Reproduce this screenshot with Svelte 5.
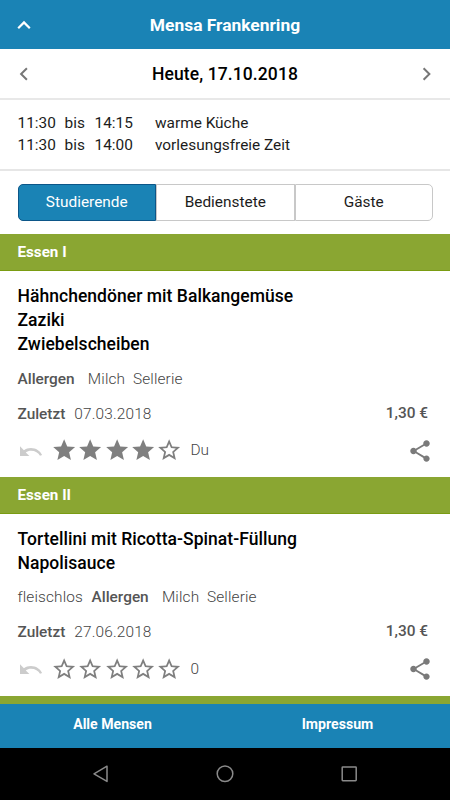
<script lang="ts">
	type Meal = {
		category: string;
		components: string[];
		tags: string[];
		allergens: string[];
		lastServed: string;
		price: string;
		rating: number;
		ratingLabel: string;
	};

	const hours = [
		{ from: '11:30', to: '14:15', label: 'warme Küche' },
		{ from: '11:30', to: '14:00', label: 'vorlesungsfreie Zeit' }
	];
	const groups = ['Studierende', 'Bedienstete', 'Gäste'];
	const meals: Meal[] = [
		{
			category: 'Essen I',
			components: ['Hähnchendöner mit Balkangemüse', 'Zaziki', 'Zwiebelscheiben'],
			tags: [],
			allergens: ['Milch', 'Sellerie'],
			lastServed: '07.03.2018',
			price: '1,30 €',
			rating: 4,
			ratingLabel: 'Du'
		},
		{
			category: 'Essen II',
			components: ['Tortellini mit Ricotta-Spinat-Füllung', 'Napolisauce'],
			tags: ['fleischlos'],
			allergens: ['Milch', 'Sellerie'],
			lastServed: '27.06.2018',
			price: '1,30 €',
			rating: 0,
			ratingLabel: '0'
		}
	];

	let activeGroup = $state('Studierende');
</script>

<div class="app">
	<header>
		<button class="icon" aria-label="Menü">
			<svg width="24" height="24" viewBox="0 0 24 24"><path d="M6.2 15.2 12 9.4l5.8 5.8" fill="none" stroke="#fff" stroke-width="2.2" /></svg>
		</button>
		<h1>Mensa Frankenring</h1>
	</header>

	<div class="date">
		<button class="icon" aria-label="Zurück">
			<svg width="24" height="24" viewBox="0 0 24 24"><path d="M14.9 6.2 9.1 12l5.8 5.8" fill="none" stroke="#777" stroke-width="2" /></svg>
		</button>
		<h2>Heute, 17.10.2018</h2>
		<button class="icon" aria-label="Weiter">
			<svg width="24" height="24" viewBox="0 0 24 24"><path d="M9.6 6.2 15.4 12l-5.8 5.8" fill="none" stroke="#777" stroke-width="2" /></svg>
		</button>
	</div>

	<div class="hours">
		{#each hours as hour}
			<span>{hour.from}</span>
			<span>bis</span>
			<span>{hour.to}</span>
			<span>{hour.label}</span>
		{/each}
	</div>

	<main>
		<div class="segments">
			{#each groups as group}
				<button class:active={group === activeGroup} onclick={() => (activeGroup = group)}>{group}</button>
			{/each}
		</div>

		{#each meals as meal}
			<h3>{meal.category}</h3>
			<section>
				<div class="components">
					{#each meal.components as component}
						<div>{component}</div>
					{/each}
				</div>
				<div class="row allergens">
					{#each meal.tags as tag}
						<span class="tag">{tag}</span>
					{/each}
					<b>Allergen</b>
					{#each meal.allergens as allergen}
						<span class="allergen">{allergen}</span>
					{/each}
				</div>
				<div class="row last">
					<b>Zuletzt</b>
					<span class="served">{meal.lastServed}</span>
					<b class="price">{meal.price}</b>
				</div>
				<div class="rating">
					<svg class="undo" width="26" height="24" viewBox="0 0 26 24"><path d="M3 7.3v9.6h9.4l-3.6-3.5c1.5-1.1 3.2-1.7 5.1-1.7 4.2 0 7.6 2 9.1 5l2.1-.8C23.1 12 19 9.1 13.9 9.1c-2.7 0-5.1.8-7 2.2z" fill="#ccc" /></svg>
					<div class="stars">
						{#each [1, 2, 3, 4, 5] as star}
							<svg width="26.3" height="26.3" viewBox="0 0 24 24">
								{#if star <= meal.rating}
									<path d="M12 17.27 18.18 21l-1.64-7.03L22 9.24l-7.19-.61L12 2 9.19 8.63 2 9.24l5.46 4.73L5.82 21z" fill="#7f7f7f" />
								{:else}
									<path d="M22 9.24l-7.19-.62L12 2 9.19 8.63 2 9.24l5.46 4.73L5.82 21 12 17.27 18.18 21l-1.63-7.03L22 9.24zM12 15.4l-3.76 2.27 1-4.28-3.32-2.88 4.38-.38L12 6.1l1.71 4.04 4.38.38-3.32 2.88 1 4.28L12 15.4z" fill="#7f7f7f" />
								{/if}
							</svg>
						{/each}
					</div>
					<span class="count">{meal.ratingLabel}</span>
					<svg class="share" width="26" height="26" viewBox="0 0 24 24"><path d="M18 16.08c-.76 0-1.44.3-1.96.77L8.91 12.7c.05-.23.09-.46.09-.7s-.04-.47-.09-.7l7.05-4.11c.54.5 1.25.81 2.04.81 1.66 0 3-1.34 3-3s-1.34-3-3-3-3 1.34-3 3c0 .24.04.47.09.7L8.04 9.81C7.5 9.31 6.79 9 6 9c-1.66 0-3 1.34-3 3s1.34 3 3 3c.79 0 1.5-.31 2.04-.81l7.12 4.16c-.05.21-.08.43-.08.65 0 1.61 1.31 2.92 2.92 2.92s2.92-1.31 2.92-2.92-1.31-2.92-2.92-2.92z" fill="#7a7a7a" /></svg>
				</div>
			</section>
		{/each}
		<h3></h3>
	</main>

	<footer>
		<span>Alle Mensen</span>
		<span>Impressum</span>
	</footer>
	<nav>
		<svg width="18" height="20" viewBox="0 0 18 20"><path d="M15 2.2v15.2L2 9.8z" fill="none" stroke="#8a8a8a" stroke-width="1.5" stroke-linejoin="round" /></svg>
		<svg width="18" height="20" viewBox="0 0 18 20"><circle cx="9" cy="9.7" r="7.8" fill="none" stroke="#8a8a8a" stroke-width="1.5" /></svg>
		<svg width="18" height="20" viewBox="0 0 18 20"><rect x="2.2" y="2.9" width="14" height="13.8" rx=".6" fill="none" stroke="#8a8a8a" stroke-width="1.5" /></svg>
	</nav>
</div>

<style>
	:global(body) {
		margin: 0;
	}
	.app {
		box-sizing: border-box;
		width: 450px;
		height: 800px;
		display: flex;
		flex-direction: column;
		overflow: hidden;
		background: #fff;
		color: #000;
		font-family: Roboto, sans-serif;
		font-size: 15.4px;
	}
	h1,
	h2,
	h3 {
		margin: 0;
	}
	button {
		margin: 0;
		padding: 0;
		border: 0;
		background: none;
		color: inherit;
		font: inherit;
	}
	.icon {
		width: 24px;
		height: 24px;
	}
	.icon svg {
		display: block;
	}
	header {
		flex: none;
		height: 49px;
		padding: 0 12px;
		display: grid;
		grid-template-columns: 24px 1fr 24px;
		align-items: center;
		background: #1a83b5;
		color: #fff;
	}
	h1,
	h2 {
		font-size: 17.5px;
		font-weight: 500;
		line-height: 24px;
		letter-spacing: 0.1px;
		text-align: center;
	}
	h1 {
		font-size: 17.4px;
		font-weight: 700;
		letter-spacing: 0;
	}
	.date {
		flex: none;
		height: 49px;
		padding: 0 12px;
		display: grid;
		grid-template-columns: 24px 1fr 24px;
		align-items: center;
		border-bottom: 2px solid #e8e8e8;
	}
	.hours {
		flex: none;
		box-sizing: border-box;
		height: 71px;
		padding: 12px 17.5px 0;
		display: grid;
		grid-template-columns: 47px 30px 60.5px 1fr;
		grid-auto-rows: 22px;
		line-height: 22px;
		color: #1c1c1c;
		border-bottom: 2px solid #e6e6e6;
	}
	main {
		flex: 1;
		min-height: 0;
		overflow: hidden;
	}
	.segments {
		box-sizing: border-box;
		height: 37px;
		margin: 13px 17px 13px 17.5px;
		display: grid;
		grid-template-columns: repeat(3, 1fr);
	}
	.segments button {
		border: 1px solid #c8c8c8;
		color: #1c1c1c;
		line-height: 33px;
		padding-bottom: 1px;
	}
	.segments button:first-child {
		border-radius: 5px 0 0 5px;
	}
	.segments button:last-child {
		border-radius: 0 5px 5px 0;
	}
	.segments button.active {
		background: #1a83b5;
		border-color: #0c5688;
		color: #fff;
	}
	h3 {
		box-sizing: border-box;
		height: 37px;
		padding: 0 17.5px;
		background: #8aa632;
		border-bottom: 1px solid #7a9c12;
		color: #fff;
		font-size: 15.2px;
		font-weight: 700;
		line-height: 36px;
	}
	section {
		padding: 13px 18px 12.4px 17.5px;
	}
	.components {
		font-size: 17.5px;
		font-weight: 500;
		letter-spacing: 0.04px;
		line-height: 24.2px;
	}
	.row {
		display: flex;
		height: 22px;
		line-height: 22px;
		letter-spacing: 0.15px;
		color: #444;
		font-weight: 300;
	}
	.row b {
		font-weight: 500;
		letter-spacing: 0;
		color: #555;
	}
	.allergens {
		margin-top: 11px;
	}
	.tag {
		margin-right: 8.5px;
	}
	.allergens b {
		margin-right: 5.5px;
	}
	.allergen {
		margin-left: 7.7px;
	}
	.last {
		margin-top: 13px;
	}
	.served {
		margin-left: 9px;
	}
	.row .price {
		margin: -1px 4px 0 auto;
	}
	.rating {
		height: 28px;
		margin-top: 12px;
		display: flex;
		align-items: center;
	}
	.undo {
		margin-left: -1px;
	}
	.stars {
		margin-left: 8.5px;
		display: flex;
	}
	.stars svg {
		display: block;
	}
	.count {
		margin-left: 8px;
		margin-bottom: 1px;
		color: #444;
		font-weight: 300;
	}
	.share {
		margin-left: auto;
		margin-right: -1px;
	}
	footer {
		flex: none;
		height: 44px;
		display: grid;
		grid-template-columns: 1fr 1fr;
		background: #1a83b5;
		color: #fff;
		font-size: 14.1px;
		font-weight: 700;
		line-height: 41px;
		text-align: center;
	}
	nav {
		flex: none;
		height: 52px;
		padding: 0 92px;
		display: flex;
		align-items: center;
		justify-content: space-between;
		background: #000;
	}
</style>
